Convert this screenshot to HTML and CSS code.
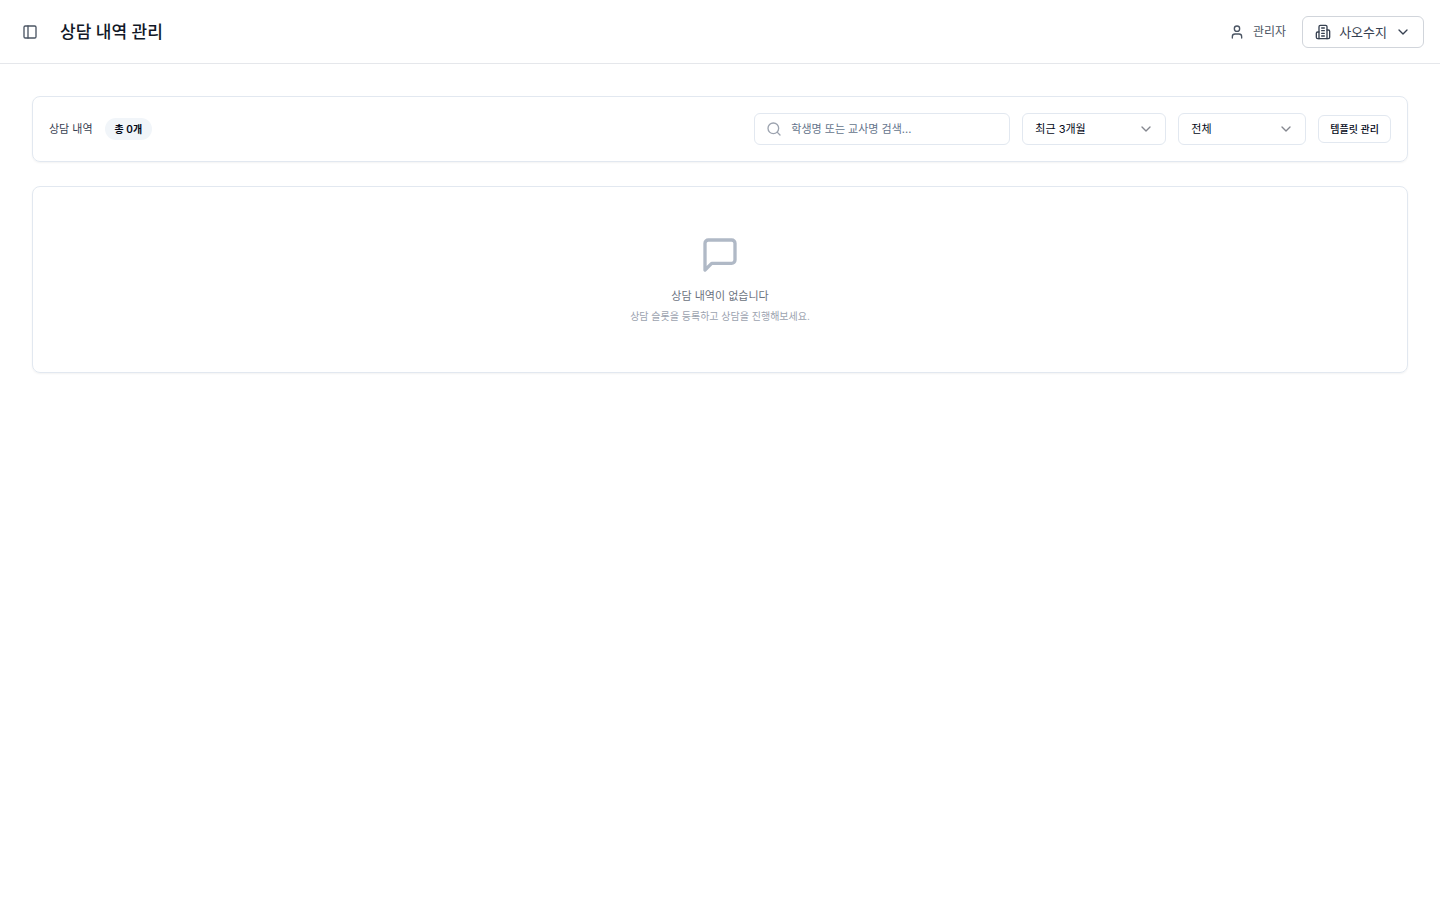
FILE: index.html
```html
<!doctype html>
<html lang="ko">
	<head>
		<meta charset="utf-8">
		<title>상담 내역 관리</title>
		<meta name="viewport" content="width=device-width, initial-scale=1">
		<link rel="stylesheet" href="styles.css">
	</head>
	<body>
		<header class="topbar">
			<button type="button" class="sidebar-toggle" aria-label="사이드바">
				<svg class="icon" viewBox="0 0 24 24"><rect width="18" height="18" x="3" y="3" rx="2" /><path d="M9 3v18" /></svg>
			</button>
			<h1>상담 내역 관리</h1>
			<div class="user">
				<svg class="icon" viewBox="0 0 24 24"><path d="M19 21v-2a4 4 0 0 0-4-4H9a4 4 0 0 0-4 4v2" /><circle cx="12" cy="7" r="4" /></svg>
				<span>관리자</span>
			</div>
			<button type="button" class="branch">
				<svg class="icon" viewBox="0 0 24 24">
					<path d="M6 22V4a2 2 0 0 1 2-2h8a2 2 0 0 1 2 2v18Z" />
					<path d="M6 12H4a2 2 0 0 0-2 2v6a2 2 0 0 0 2 2h2" />
					<path d="M18 9h2a2 2 0 0 1 2 2v9a2 2 0 0 1-2 2h-2" />
					<path d="M10 6h4M10 10h4M10 14h4M10 18h4" />
				</svg>
				<span>사오수지</span>
				<svg class="icon" viewBox="0 0 24 24"><path d="m6 9 6 6 6-6" /></svg>
			</button>
		</header>

		<main>
			<section class="card toolbar">
				<h2>상담 내역</h2>
				<span class="badge">총 0개</span>
				<form class="filters">
					<div class="search">
						<svg class="icon" viewBox="0 0 24 24"><circle cx="11" cy="11" r="8" /><path d="m21 21-4.3-4.3" /></svg>
						<input type="text" aria-label="검색" placeholder="학생명 또는 교사명 검색...">
					</div>
					<div class="select period">
						<select aria-label="기간">
							<option>최근 3개월</option>
						</select>
						<svg class="icon" viewBox="0 0 24 24"><path d="m6 9 6 6 6-6" /></svg>
					</div>
					<div class="select status">
						<select aria-label="상태">
							<option>전체</option>
						</select>
						<svg class="icon" viewBox="0 0 24 24"><path d="m6 9 6 6 6-6" /></svg>
					</div>
					<button type="button" class="template">템플릿 관리</button>
				</form>
			</section>

			<section class="card empty">
				<svg class="icon" viewBox="0 0 24 24"><path d="M21 15a2 2 0 0 1-2 2H7l-4 4V5a2 2 0 0 1 2-2h14a2 2 0 0 1 2 2z" /></svg>
				<p class="message">상담 내역이 없습니다</p>
				<p class="hint">상담 슬롯을 등록하고 상담을 진행해보세요.</p>
			</section>
		</main>
	</body>
</html>
```
FILE: styles.css
```css
* {
	box-sizing: border-box;
}
body {
	margin: 0;
	background: white;
	color: #020817;
	font-family: Inter, "Noto Sans CJK KR", sans-serif;
	font-size: 11px;
	line-height: 18px;
}
h1, h2, p {
	margin: 0;
}
button, input, select {
	font: inherit;
	color: inherit;
	background: white;
}
.icon {
	width: 16px;
	height: 16px;
	flex: none;
	fill: none;
	stroke: currentColor;
	stroke-width: 2;
	stroke-linecap: round;
	stroke-linejoin: round;
}

/* header */
.topbar {
	display: flex;
	align-items: center;
	height: 64px;
	padding: 0 16px;
	border-bottom: 1px solid #e5e7eb;
}
.sidebar-toggle {
	display: flex;
	align-items: center;
	justify-content: center;
	width: 28px;
	height: 28px;
	padding: 0;
	border: 0;
	color: #4b5563;
}
h1 {
	margin-left: 16px;
	color: #111827;
	font-size: 17px;
	line-height: 24px;
	font-weight: 500;
}
.user {
	display: flex;
	align-items: center;
	gap: 8px;
	margin: 0 16px 0 auto;
	color: #4b5563;
	font-size: 12px;
}
.branch {
	display: flex;
	align-items: center;
	gap: 8px;
	height: 32px;
	padding: 0 12px;
	border: 1px solid #d1d5db;
	border-radius: 6px;
	color: #374151;
	font-size: 13px;
}

/* content */
main {
	display: flex;
	flex-direction: column;
	gap: 24px;
	padding: 32px;
}
.card {
	border: 1px solid #e2e8f0;
	border-radius: 8px;
	box-shadow: 0 1px 2px rgba(0, 0, 0, .05);
}
.toolbar {
	display: flex;
	align-items: center;
	gap: 12px;
	padding: 16px;
}
h2 {
	color: #374151;
	font-size: 11px;
	font-weight: 400;
}
.badge {
	padding: 2px 10px;
	border-radius: 12px;
	background: #f1f5f9;
	font-size: 10px;
	font-weight: 600;
}
.filters {
	display: flex;
	align-items: center;
	gap: 12px;
	margin-left: auto;
}
.search, .select {
	position: relative;
}
.search input, .select select {
	display: block;
	width: 100%;
	height: 32px;
	border: 1px solid #e2e8f0;
	border-radius: 6px;
	appearance: none;
}
.search {
	width: 256px;
}
.search input {
	padding: 0 12px 0 36px;
}
.search input::placeholder {
	color: #64748b;
}
.search .icon, .select .icon {
	position: absolute;
	top: 8px;
	color: #9ca3af;
	pointer-events: none;
}
.search .icon {
	left: 12px;
}
.select select {
	padding: 0 36px 0 12px;
}
.select .icon {
	right: 12px;
	color: #84878f;
}
.period {
	width: 144px;
}
.status {
	width: 128px;
}
.template {
	height: 28px;
	padding: 0 11px;
	border: 1px solid #e2e8f0;
	border-radius: 6px;
	font-size: 10px;
	font-weight: 500;
}

.empty {
	display: flex;
	flex-direction: column;
	align-items: center;
	padding: 48px;
}
.empty .icon {
	width: 40px;
	height: 40px;
	margin-bottom: 12px;
	color: #b0b9c6;
}
.message {
	margin-bottom: 3px;
	color: #6b7280;
}
.hint {
	color: #9ca3af;
	font-size: 10px;
	line-height: 16px;
}
```
